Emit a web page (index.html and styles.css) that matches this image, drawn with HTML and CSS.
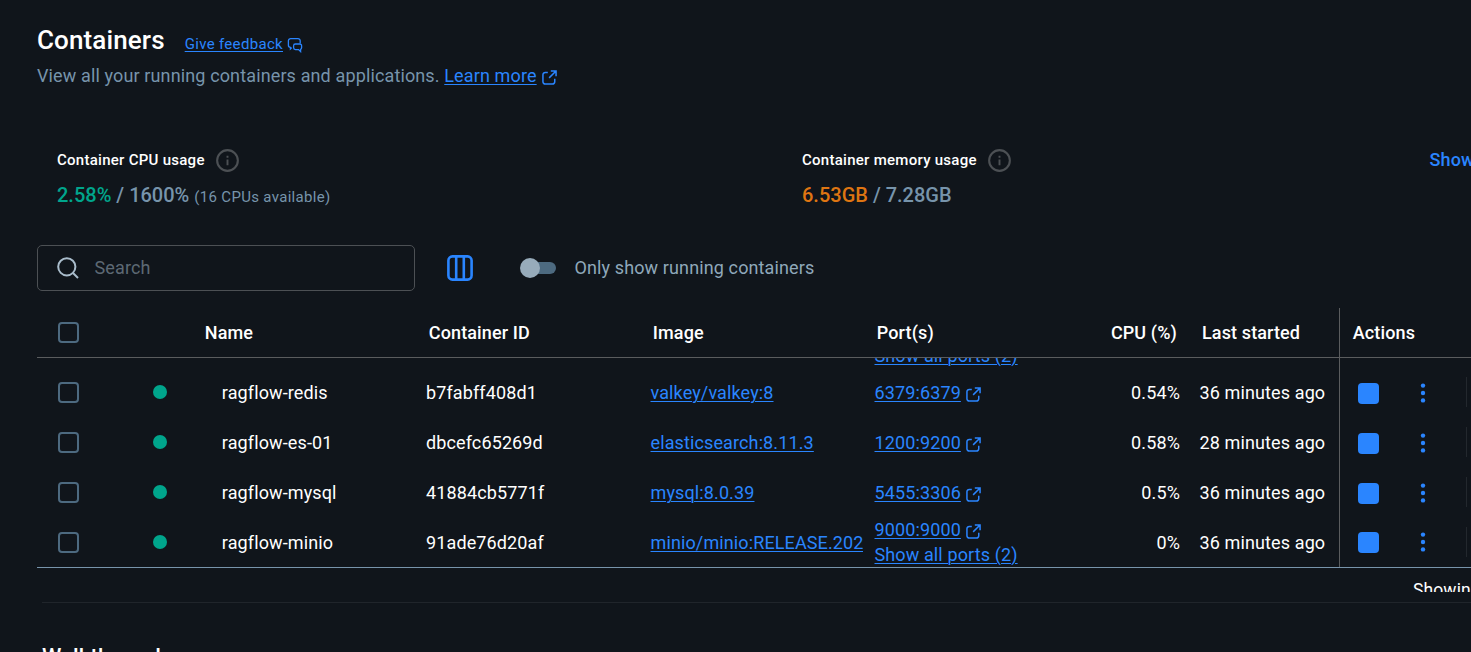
FILE: index.html
```html
<!DOCTYPE html>
<html lang="en">
<head>
    <meta charset="UTF-8">
    <meta name="viewport" content="width=device-width, initial-scale=1.0">
    <title>Containers</title>
    <link rel="stylesheet" href="styles.css">
</head>
<body>
    <!-- shared icons -->
    <svg class="sprite">
        <symbol id="external" viewBox="0 0 16 16">
            <path d="M6.2 2.6H3.4A2.4 2.4 0 0 0 1 5v7.6A2.4 2.4 0 0 0 3.4 15h7.8a2.4 2.4 0 0 0 2.4-2.4V9.2M9.4 1H15v5.6M14.7 1.3L7.6 8.4" fill="none" stroke="currentColor" stroke-width="1.6"/>
        </symbol>
        <symbol id="info" viewBox="0 0 24 24">
            <circle cx="12" cy="12" r="10.8" fill="none" stroke="currentColor" stroke-width="2.2"/>
            <path d="M12 11v6M12 7v2" stroke="currentColor" stroke-width="2"/>
        </symbol>
        <symbol id="dots" viewBox="0 0 6 20">
            <circle cx="3" cy="2.6" r="2.2" fill="currentColor"/>
            <circle cx="3" cy="10" r="2.2" fill="currentColor"/>
            <circle cx="3" cy="17.4" r="2.2" fill="currentColor"/>
        </symbol>
    </svg>

    <main class="page">
        <header class="title-row">
            <h1>Containers</h1>
            <a class="feedback" href="#">Give feedback</a>
            <svg class="feedback-icon" viewBox="0 0 16 16" fill="none" stroke="currentColor" stroke-width="1.3">
                <path d="M4.8 10.6L3.4 12V10.4A2.2 2.2 0 0 1 1.4 8.2V3.8a2.2 2.2 0 0 1 2.2-2.2h7.4a2.2 2.2 0 0 1 2.2 2.2v2.6"/>
                <path d="M8.4 7h4.4a1.8 1.8 0 0 1 1.8 1.8v2a1.8 1.8 0 0 1-1 1.6v2.2l-2-2H8.4a1.8 1.8 0 0 1-1.8-1.8v-2A1.8 1.8 0 0 1 8.4 7z"/>
            </svg>
        </header>
        <p class="subtitle">View all your running containers and applications. <a href="#">Learn more</a><svg class="ext"><use href="#external"/></svg></p>

        <section class="usage">
            <div class="usage-item">
                <div class="usage-label">Container CPU usage <svg class="info"><use href="#info"/></svg></div>
                <div class="usage-value"><span class="green">2.58%</span> / 1600% <small>(16 CPUs available)</small></div>
            </div>
            <div class="usage-item">
                <div class="usage-label">Container memory usage <svg class="info"><use href="#info"/></svg></div>
                <div class="usage-value"><span class="orange">6.53GB</span> / 7.28GB</div>
            </div>
            <a class="show-charts" href="#">Show charts</a>
        </section>

        <section class="toolbar">
            <label class="search">
                <svg class="search-icon" viewBox="0 0 22 22" fill="none" stroke="currentColor" stroke-width="2">
                    <circle cx="9.8" cy="9.8" r="8.6"/>
                    <path d="M16 16l5 5"/>
                </svg>
                <input type="text" placeholder="Search">
            </label>
            <svg class="columns-icon" viewBox="0 0 26 26" fill="none" stroke="currentColor" stroke-width="2.6">
                <rect x="1.4" y="1.4" width="23.2" height="23.2" rx="4"/>
                <path d="M9.2 1.4v23.2M16.8 1.4v23.2"/>
            </svg>
            <span class="switch"><span class="knob"></span></span>
            <span class="switch-label">Only show running containers</span>
        </section>

        <section class="table">
            <div class="row head">
                <div class="check"><span class="box"></span></div>
                <div></div>
                <div>Name</div>
                <div>Container ID</div>
                <div>Image</div>
                <div>Port(s)</div>
                <div class="cpu">CPU (%)</div>
                <div class="started">Last started</div>
                <div class="actions">Actions</div>
            </div>
            <div class="table-body">
                <div class="row scrolled">
                    <div></div>
                    <div></div>
                    <div></div>
                    <div></div>
                    <div></div>
                    <div class="ports"><span>&nbsp;</span><a href="#">Show all ports (2)</a></div>
                    <div></div>
                    <div></div>
                    <div class="actions"></div>
                </div>
                <div class="row">
                    <div class="check"><span class="box"></span></div>
                    <div><span class="status"></span></div>
                    <div class="name">ragflow-redis</div>
                    <div class="text">b7fabff408d1</div>
                    <div class="image"><a href="#">valkey/valkey:8</a></div>
                    <div class="ports"><span><a href="#">6379:6379</a><svg class="ext"><use href="#external"/></svg></span></div>
                    <div class="text cpu">0.54%</div>
                    <div class="text started">36 minutes ago</div>
                    <div class="actions"><span class="stop"></span><svg class="dots"><use href="#dots"/></svg><span class="sep"></span></div>
                </div>
                <div class="row">
                    <div class="check"><span class="box"></span></div>
                    <div><span class="status"></span></div>
                    <div class="name">ragflow-es-01</div>
                    <div class="text">dbcefc65269d</div>
                    <div class="image"><a href="#">elasticsearch:8.11.3</a></div>
                    <div class="ports"><span><a href="#">1200:9200</a><svg class="ext"><use href="#external"/></svg></span></div>
                    <div class="text cpu">0.58%</div>
                    <div class="text started">28 minutes ago</div>
                    <div class="actions"><span class="stop"></span><svg class="dots"><use href="#dots"/></svg><span class="sep"></span></div>
                </div>
                <div class="row">
                    <div class="check"><span class="box"></span></div>
                    <div><span class="status"></span></div>
                    <div class="name">ragflow-mysql</div>
                    <div class="text">41884cb5771f</div>
                    <div class="image"><a href="#">mysql:8.0.39</a></div>
                    <div class="ports"><span><a href="#">5455:3306</a><svg class="ext"><use href="#external"/></svg></span></div>
                    <div class="text cpu">0.5%</div>
                    <div class="text started">36 minutes ago</div>
                    <div class="actions"><span class="stop"></span><svg class="dots"><use href="#dots"/></svg><span class="sep"></span></div>
                </div>
                <div class="row last">
                    <div class="check"><span class="box"></span></div>
                    <div><span class="status"></span></div>
                    <div class="name">ragflow-minio</div>
                    <div class="text">91ade76d20af</div>
                    <div class="image"><a href="#">minio/minio:RELEASE.2023-12-20</a></div>
                    <div class="ports"><span><a href="#">9000:9000</a><svg class="ext"><use href="#external"/></svg></span><a href="#">Show all ports (2)</a></div>
                    <div class="text cpu">0%</div>
                    <div class="text started">36 minutes ago</div>
                    <div class="actions"><span class="stop"></span><svg class="dots"><use href="#dots"/></svg><span class="sep"></span></div>
                </div>
            </div>
        </section>
        <div class="count">Showing 5 items</div>

        <section class="walkthroughs">
            <h2>Walkthroughs</h2>
        </section>
    </main>
</body>
</html>
```
FILE: styles.css
```css
* {
    box-sizing: border-box;
}

body {
    margin: 0;
    height: 652px;
    overflow: hidden;
    background-color: #10151b;
    color: #fff;
    font-family: Roboto, sans-serif;
    font-size: 18px;
    letter-spacing: 0.12px;
}

a {
    color: #2a85ff;
    text-decoration: underline;
    text-underline-offset: 2px;
    text-decoration-thickness: 1px;
}

.sprite {
    display: none;
}

.page {
    width: 1540px;
    padding: 22px 0 0 37px;
}

/* Title */
.title-row {
    display: flex;
    align-items: center;
    height: 36px;
}

h1 {
    margin: 0 20px 0 0;
    font-size: 26px;
    font-weight: 500;
}

.feedback {
    margin-top: 8px;
    font-size: 15px;
    letter-spacing: 0.32px;
}

.feedback-icon {
    width: 16px;
    height: 16px;
    margin: 9px 0 0 4px;
    color: #2a85ff;
}

.subtitle {
    display: flex;
    align-items: center;
    margin: 4px 0 0;
    height: 27px;
    color: #7794ab;
    letter-spacing: 0.13px;
    white-space: pre;
}

.ext {
    width: 15px;
    height: 15px;
    margin: 4px 0 0 5.5px;
    color: #2a85ff;
}

/* CPU / memory numbers */
.usage {
    display: flex;
    margin-top: 58px;
    padding-left: 20px;
    height: 98px;
}

.usage-item {
    width: 745px;
}

.usage-item + .usage-item {
    width: 627.5px;
}

.usage-label {
    display: flex;
    align-items: center;
    gap: 11px;
    height: 26px;
    font-size: 15px;
    font-weight: 500;
    letter-spacing: 0.27px;
}

.info {
    width: 23px;
    height: 23px;
    color: #4c5054;
}

.usage-value {
    margin-top: 10px;
    line-height: 25px;
    font-size: 20px;
    font-weight: 500;
    letter-spacing: 0;
    color: #7794ab;
}

.usage-value small {
    font-size: 15px;
    font-weight: 400;
    letter-spacing: 0.32px;
}

.green {
    color: #00a58c;
}

.orange {
    color: #df7512;
}

.show-charts {
    line-height: 26px;
    font-weight: 500;
    text-decoration: none;
    white-space: nowrap;
}

/* Search and filters */
.toolbar {
    display: flex;
    align-items: center;
    height: 46px;
}

.search {
    display: flex;
    align-items: center;
    width: 378px;
    height: 46px;
    padding-left: 19px;
    border: 1px solid #4c5054;
    border-radius: 5px;
}

.search-icon {
    width: 22px;
    height: 22px;
    color: #a9bccb;
}

.search input {
    width: 280px;
    margin-left: 15.5px;
    padding: 0 0 2px;
    border: 0;
    outline: 0;
    background: none;
    color: #fff;
    font: inherit;
    letter-spacing: inherit;
}

.search input::placeholder {
    color: #5d6974;
}

.columns-icon {
    width: 26px;
    height: 26px;
    margin-left: 32px;
    color: #2a85ff;
}

.switch {
    display: flex;
    align-items: center;
    width: 34px;
    height: 12px;
    margin-left: 49px;
    border-radius: 6px;
    background-color: #4d6a80;
}

.knob {
    flex: none;
    width: 20px;
    height: 20px;
    margin-left: -2px;
    border-radius: 50%;
    background-color: #97abba;
}

.switch-label {
    margin-left: 18.5px;
    padding-bottom: 2px;
    color: #8fa8ba;
}

/* Table */
.table {
    margin-top: 17px;
    border-bottom: 1px solid #7794ab;
}

.row {
    display: grid;
    grid-template-columns: 93px 62px 224px 224px 224px 223px 103px 149px 1fr;
    align-items: center;
    flex: none;
    height: 50px;
}

.row > div {
    padding-left: 10px;
    white-space: nowrap;
}

.row .check {
    padding-left: 21px;
}

.row.head {
    border-bottom: 1px solid #5a5c5e;
    font-weight: 500;
}

.row.head > div {
    padding-left: 12.8px;
}

.row.head > .check {
    padding-left: 21px;
}

.row .cpu {
    padding-right: 10px;
    text-align: right;
}

.head .cpu {
    padding-right: 13px;
}

.row .started {
    padding-left: 9.5px;
}

.row.head > .started {
    padding-left: 12px;
}

.box {
    display: block;
    width: 21px;
    height: 21px;
    border: 2px solid #4d6a80;
    border-radius: 4px;
}

.status {
    display: block;
    width: 14px;
    height: 14px;
    margin-left: 13.4px;
    border-radius: 50%;
    background-color: #00a58c;
}

.table-body {
    display: flex;
    flex-direction: column;
    justify-content: flex-end;
    height: 209px;
    overflow: hidden;
}

.text,
.name,
.image {
    padding-top: 1px;
    line-height: 25px;
}

.row .name {
    padding-left: 29.8px;
}

.row .image {
    margin-right: 1px;
    padding-left: 10.5px;
    overflow: hidden;
}

.row .ports {
    display: flex;
    flex-direction: column;
    align-items: flex-start;
    padding: 1px 0 0 10.5px;
    line-height: 25px;
}

.row.last .ports {
    padding-top: 0;
}

.ports span {
    display: flex;
    align-items: center;
}

.row .actions {
    display: flex;
    align-items: center;
    align-self: stretch;
    padding-left: 18px;
    border-left: 1px solid #5a5c5e;
}

.stop {
    width: 21px;
    height: 21px;
    margin-top: 2px;
    border-radius: 4px;
    background-color: #2a85ff;
}

.dots {
    width: 6px;
    height: 20px;
    margin: 2px 0 0 41.4px;
    color: #2a85ff;
}

.last .stop,
.last .dots {
    margin-top: 0;
}

.sep {
    width: 1px;
    height: 30px;
    margin-left: 39.6px;
    background-color: #23282e;
}

.count {
    height: 24px;
    padding: 11px 0 0 1376px;
    line-height: 22px;
    font-size: 17.5px;
    overflow: hidden;
}

/* Walkthroughs */
.walkthroughs {
    margin: 10px 0 0 5px;
    border-top: 1px solid #20252b;
}

h2 {
    margin: 41px 0 0;
    font-size: 22px;
    font-weight: 500;
}
```
